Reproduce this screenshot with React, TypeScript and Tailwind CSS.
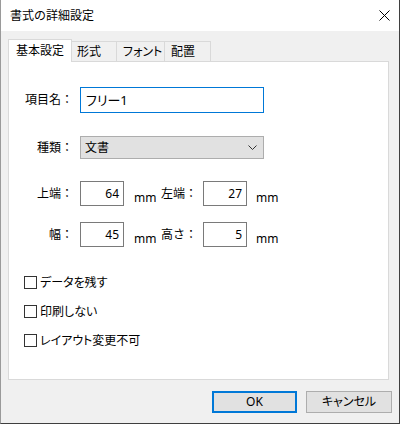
import React from 'react'

const font = "font-['Noto_Sans','Noto_Sans_CJK_JP',sans-serif]"
const palt = "[font-feature-settings:'palt'] whitespace-nowrap"

function NumField({ value }: { value: string }) {
  return (
    <div className="w-[44px] h-[25px] bg-white border border-[#7a7a7a] flex items-center justify-end pr-[4px] text-[12px] leading-[16px] text-[#000]">
      {value}
    </div>
  )
}

function Check({ label }: { label: string }) {
  return (
    <div className="flex items-center h-[13px]">
      <div className="w-[13px] h-[13px] border border-[#333] bg-white" />
      <span className={`ml-[3px] text-[12px] leading-[16px] ${palt}`}>{label}</span>
    </div>
  )
}

export default function App() {
  return (
    <div className={`${font} w-[400px] h-[424px] bg-[#f0f0f0] flex flex-col border-l border-l-[#9a9a9a] border-r border-r-[#3f3f3f] border-b border-b-[#3f3f3f] text-black select-none`}>
      {/* title bar */}
      <div className="h-[31px] bg-white flex items-center justify-between pl-[9px] pr-[9px] shrink-0">
        <span className="text-[12px] leading-[16px]">書式の詳細設定</span>
        <svg width="11" height="11" viewBox="0 0 11 11">
          <path d="M0.5 0.5 L10.5 10.5 M10.5 0.5 L0.5 10.5" stroke="#000" strokeWidth="1" />
        </svg>
      </div>

      {/* tabs */}
      <div className="mt-[8px] ml-[7px] h-[22px] flex items-end">
        <div className="relative z-10 w-[64px] h-[23px] -mb-px bg-white border border-[#d9d9d9] border-b-0 flex items-center justify-center text-[12px] leading-[16px]">
          基本設定
        </div>
        <div className="w-[45px] h-[20px] bg-[#f0f0f0] border-t border-r border-[#d9d9d9] flex items-center pl-[5px] text-[12px] leading-[16px]">
          形式
        </div>
        <div className={`w-[48px] h-[20px] bg-[#f0f0f0] border-t border-r border-[#d9d9d9] flex items-center pl-[6px] text-[12px] leading-[16px] ${palt}`}>
          フォント
        </div>
        <div className="w-[46px] h-[20px] bg-[#f0f0f0] border-t border-r border-[#d9d9d9] flex items-center pl-[6px] text-[12px] leading-[16px]">
          配置
        </div>
      </div>

      {/* panel */}
      <div className="ml-[7px] w-[381px] h-[319px] bg-white border border-[#d9d9d9] flex flex-col pt-[25px] text-[12px] leading-[16px]">
        {/* name */}
        <div className="flex items-center">
          <div className="w-[64px] text-right">項目名：</div>
          <div className={`ml-[7px] w-[184px] h-[26px] border border-[#0078d7] flex items-center pl-[5px] text-[13px] ${palt}`}>
            フリー1
          </div>
        </div>

        {/* kind */}
        <div className="flex items-center mt-[23px]">
          <div className="w-[64px] text-right">種類：</div>
          <div className="ml-[7px] w-[184px] h-[23px] bg-[#e1e1e1] border border-[#adadad] flex items-center justify-between pl-[4px] pr-[6px]">
            <span>文書</span>
            <svg width="9" height="6" viewBox="0 0 9 6">
              <path d="M0.5 0.5 L4.5 4.5 L8.5 0.5" fill="none" stroke="#333" strokeWidth="1" />
            </svg>
          </div>
        </div>

        {/* position */}
        <div className="flex items-stretch mt-[22px] h-[25px]">
          <div className="w-[64px] text-right self-center">上端：</div>
          <div className="ml-[7px]"><NumField value="64" /></div>
          <div className="w-[37px] pl-[10px] self-end">mm</div>
          <div className="w-[36px] self-center">左端：</div>
          <div className="ml-[6px]"><NumField value="27" /></div>
          <div className="pl-[9px] self-end">mm</div>
        </div>

        <div className="flex items-stretch mt-[16px] h-[25px]">
          <div className="w-[64px] text-right self-center">幅：</div>
          <div className="ml-[7px]"><NumField value="45" /></div>
          <div className="w-[37px] pl-[10px] self-end">mm</div>
          <div className="w-[36px] self-center text-right">高さ：</div>
          <div className="ml-[6px]"><NumField value="5" /></div>
          <div className="pl-[9px] self-end">mm</div>
        </div>

        {/* checks */}
        <div className="flex flex-col gap-[16px] mt-[29px] pl-[15px]">
          <Check label="データを残す" />
          <Check label="印刷しない" />
          <Check label="レイアウト変更不可" />
        </div>
      </div>

      {/* buttons */}
      <div className="mt-[11px] flex justify-end pr-[7px] gap-[9px]">
        <button className="w-[85px] h-[22px] bg-[#e1e1e1] border-2 border-[#0078d7] text-[12px] leading-[16px] flex items-center justify-center">
          OK
        </button>
        <button className={`w-[86px] h-[22px] bg-[#e1e1e1] border border-[#adadad] text-[12px] leading-[16px] flex items-center justify-center ${palt}`}>
          キャンセル
        </button>
      </div>
    </div>
  )
}
